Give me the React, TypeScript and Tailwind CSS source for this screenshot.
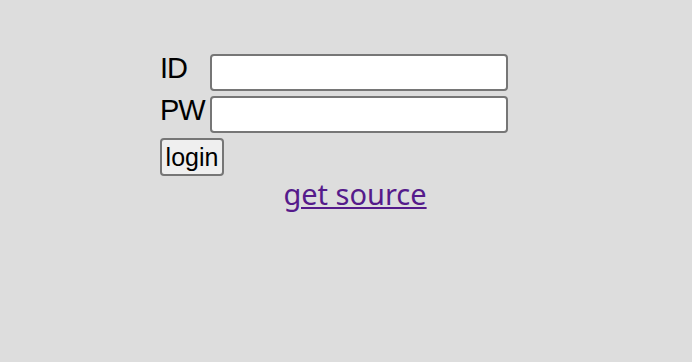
export default function App() {
  return (
    <div className="min-h-[362px] w-full bg-[#dddddd] pt-[54px] pl-[160px]" style={{ fontFamily: '"Liberation Sans", Arial, sans-serif' }}>
      <div className="w-[390px]">
        <div className="grid grid-cols-[50px_298px] gap-y-[5px] items-center">
          <label className="self-start text-[29px] leading-[29px] tracking-[-1px] text-black">ID</label>
          <input type="text" className="h-[37px] w-[298px] rounded-[4px] border-2 border-[#767676] bg-white px-1 outline-none" />
          <label className="self-start text-[29px] leading-[29px] tracking-[-1px] text-black">PW</label>
          <input type="password" className="h-[37px] w-[298px] rounded-[4px] border-2 border-[#767676] bg-white px-1 outline-none" />
        </div>
        <div className="mt-[5px]">
          <button className="h-[38px] w-[64px] rounded-[4px] border-2 border-[#767676] bg-[#efefef] text-[25px] leading-none text-black">
            login
          </button>
        </div>
        <div className="text-center">
          <a href="#" className="text-[29px] leading-[36px] text-[#551a8b] underline" style={{ fontFamily: '"Noto Sans", sans-serif' }}>
            get source
          </a>
        </div>
      </div>
    </div>
  );
}
